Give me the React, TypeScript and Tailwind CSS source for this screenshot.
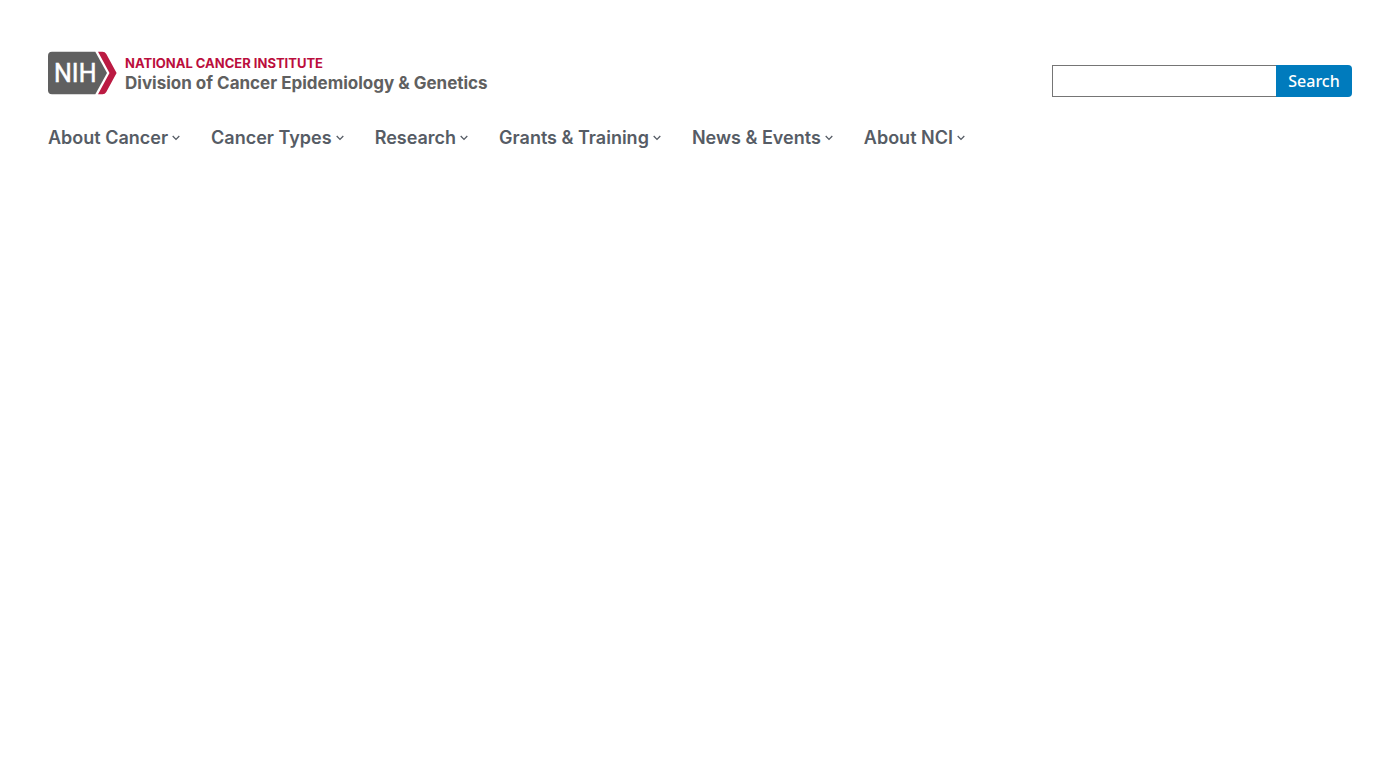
const navItems: string[] = [
  'About Cancer',
  'Cancer Types',
  'Research',
  'Grants & Training',
  'News & Events',
  'About NCI',
];

function Chevron() {
  return (
    <svg width="8" height="6" viewBox="0 0 8 6" fill="none" aria-hidden="true" className="shrink-0">
      <path d="M0.7 1L4 4.4L7.3 1" stroke="#565c65" strokeWidth="1.3" />
    </svg>
  );
}

function Logo() {
  return (
    <a href="#" className="flex items-center gap-2">
      <svg width="69" height="44" viewBox="0 0 69 44" aria-hidden="true" className="shrink-0">
        <path d="M4 0.8H47.3L59 22L47.3 43.2H4Q0 43.2 0 39.2V4.8Q0 0.8 4 0.8Z" fill="#606060" />
        <path d="M50 0.8H54.5Q57 0.8 58.3 3L68.6 22L58.3 41Q57 43.2 54.5 43.2H50L61.5 22Z" fill="#bb1a42" />
        <text x="6" y="31" fill="#ffffff" stroke="#ffffff" strokeWidth="0.5" fontSize="25" fontFamily="Roboto, sans-serif">
          NIH
        </text>
      </svg>
      <span className="flex flex-col font-['Inter',sans-serif] whitespace-nowrap">
        <span className="text-[13px] leading-5 font-bold text-[#bb0e3d]">NATIONAL CANCER INSTITUTE</span>
        <span className="text-[17px] leading-5 font-bold text-[#606060]">Division of Cancer Epidemiology &amp; Genetics</span>
      </span>
    </a>
  );
}

export default function App() {
  return (
    <header className="bg-white px-12 pt-[49px]">
      <div className="flex items-center justify-between">
        <Logo />
        <form role="search" onSubmit={(e) => e.preventDefault()} className="mt-4 flex h-8 w-[300px]">
          <input
            type="search"
            aria-label="Search"
            className="h-8 min-w-0 flex-1 border border-r-0 border-[#757575] bg-white px-2 font-['Noto_Sans',sans-serif] text-base outline-none"
          />
          <button
            type="submit"
            className="h-8 w-19 rounded-r bg-[#007bbd] font-['Noto_Sans',sans-serif] text-base leading-4 font-medium text-white"
          >
            Search
          </button>
        </form>
      </div>
      <nav aria-label="Primary" className="mt-[29px]">
        <ul className="flex gap-[31px]">
          {navItems.map((item) => (
            <li key={item}>
              <button
                type="button"
                className="flex items-center gap-1 font-['Inter',sans-serif] text-lg leading-6 font-semibold whitespace-nowrap text-[#565c65]"
              >
                {item}
                <Chevron />
              </button>
            </li>
          ))}
        </ul>
      </nav>
    </header>
  );
}
